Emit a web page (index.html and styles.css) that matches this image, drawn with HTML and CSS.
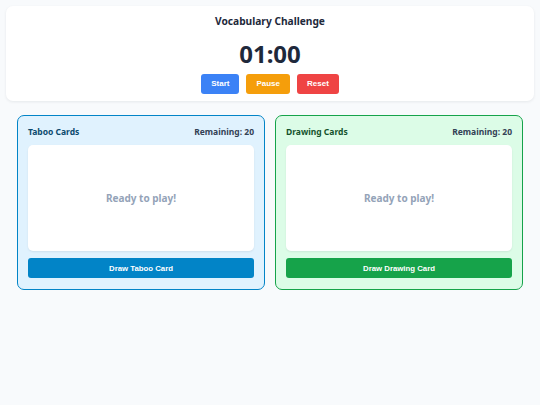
FILE: index.html
```html
<!DOCTYPE html>
<html>
<head>
<meta charset="utf-8">
<link rel="stylesheet" href="styles.css">
</head>
<body>
<div class="page">
  <header class="top">
    <h1 class="title">Vocabulary Challenge</h1>
    <div class="timer">01:00</div>
    <div class="controls">
      <button class="btn btn-start">Start</button>
      <button class="btn btn-pause">Pause</button>
      <button class="btn btn-reset">Reset</button>
    </div>
  </header>
  <main class="decks">
    <section class="deck deck-taboo">
      <div class="deck-head">
        <span class="deck-name">Taboo Cards</span>
        <span class="deck-count">Remaining: 20</span>
      </div>
      <div class="card-area">Ready to play!</div>
      <button class="draw">Draw Taboo Card</button>
    </section>
    <section class="deck deck-drawing">
      <div class="deck-head">
        <span class="deck-name">Drawing Cards</span>
        <span class="deck-count">Remaining: 20</span>
      </div>
      <div class="card-area">Ready to play!</div>
      <button class="draw">Draw Drawing Card</button>
    </section>
  </main>
</div>
</body>
</html>
```
FILE: styles.css
```css
* { box-sizing: border-box; }
html, body { margin: 0; padding: 0; }
body {
  background: #f8fafc;
  font-family: "Noto Sans", "Open Sans", sans-serif;
  color: #1e293b;
}
.page { padding: 6px; }
.top {
  background: #fff;
  border-radius: 7px;
  box-shadow: 0 1px 3px rgba(15, 23, 42, 0.08);
  display: flex;
  flex-direction: column;
  align-items: center;
  padding: 7.5px 0 7px;
}
.title {
  margin: 0;
  font-size: 10.2px;
  font-weight: 700;
  line-height: 14px;
}
.timer {
  margin-top: 11px;
  font-size: 24px;
  font-weight: 700;
  line-height: 30px;
}
.controls {
  margin-top: 5px;
  display: flex;
  gap: 7px;
}
.btn {
  border: none;
  color: #fff;
  font-family: "Liberation Sans", Arial, sans-serif;
  font-weight: 700;
  font-size: 8px;
  height: 20px;
  padding: 0 10px;
  border-radius: 3px;
}
.btn-start { background: #3b82f6; }
.btn-pause { background: #f59e0b; }
.btn-reset { background: #ef4444; }
.decks {
  margin-top: 14px;
  padding: 0 11px;
  display: grid;
  grid-template-columns: 1fr 1fr;
  gap: 10px;
}
.deck {
  border: 1.5px solid;
  border-radius: 7px;
  padding: 10.5px 10px 11px;
  display: flex;
  flex-direction: column;
}
.deck-taboo { background: #e0f2fe; border-color: #0284c7; }
.deck-drawing { background: #dcfce7; border-color: #16a34a; }
.deck-head {
  display: flex;
  justify-content: space-between;
  font-size: 8.5px;
  font-weight: 700;
  line-height: 12px;
  height: 12px;
}
.deck-taboo .deck-name { color: #0c4a6e; }
.deck-drawing .deck-name { color: #14532d; }
.deck-count { color: #334155; }
.card-area {
  margin-top: 7px;
  height: 106px;
  background: #fff;
  border-radius: 5px;
  box-shadow: 0 1px 2px rgba(15, 23, 42, 0.08);
  display: flex;
  align-items: center;
  justify-content: center;
  font-size: 10px;
  font-weight: 700;
  color: #94a3b8;
}
.draw {
  margin-top: 7px;
  height: 20px;
  border: none;
  border-radius: 3px;
  color: #fff;
  font-family: "Liberation Sans", Arial, sans-serif;
  font-weight: 700;
  font-size: 7.8px;
}
.deck-taboo .draw { background: #0284c7; }
.deck-drawing .draw { background: #16a34a; }
```
